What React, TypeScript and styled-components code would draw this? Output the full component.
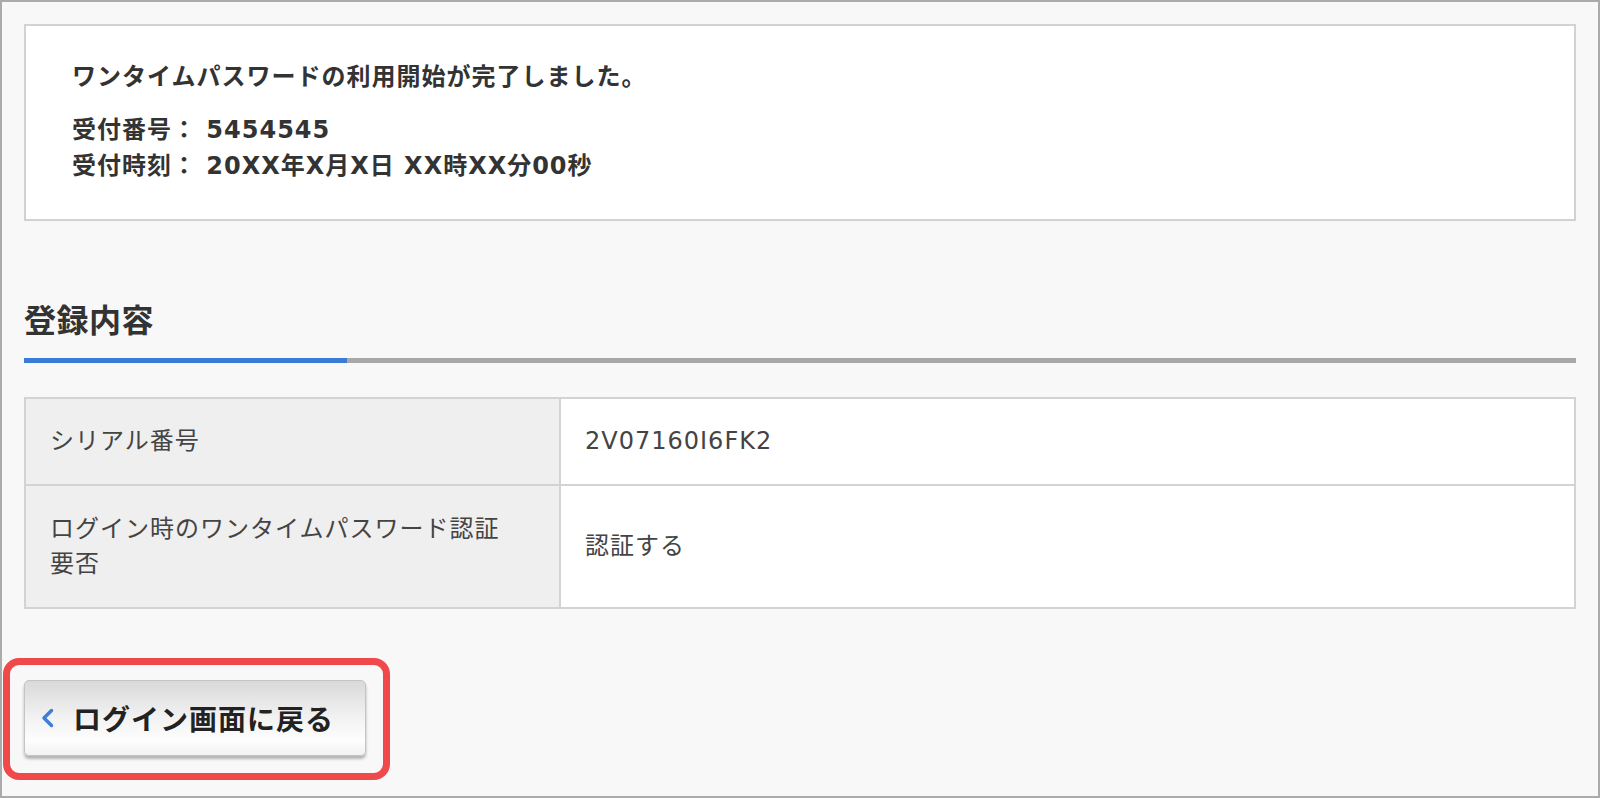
import styled, { createGlobalStyle } from "styled-components";

const rows = [
  { label: "シリアル番号", value: "2V07160I6FK2", height: 87 },
  {
    label: "ログイン時のワンタイムパスワード認証要否",
    value: "認証する",
    height: 123,
  },
];

const App = () => {
  return (
    <>
      <GlobalStyle />
      <Frame>
        <InfoBox>
          <Message>ワンタイムパスワードの利用開始が完了しました。</Message>
          <InfoLine>受付番号： 5454545</InfoLine>
          <InfoLine>受付時刻： 20XX年X月X日 XX時XX分00秒</InfoLine>
        </InfoBox>

        <Section>
          <Heading>登録内容</Heading>
          <Underline>
            <BlueBar />
            <GrayBar />
          </Underline>
          <DetailTable>
            <tbody>
              {rows.map((row) => (
                <tr key={row.label}>
                  <LabelCell $height={row.height}>{row.label}</LabelCell>
                  <ValueCell>{row.value}</ValueCell>
                </tr>
              ))}
            </tbody>
          </DetailTable>
        </Section>

        <Highlight>
          <BackButton type="button">
            <Chevron width="13" height="22" viewBox="0 0 13 22">
              <polyline
                points="10.5,3.5 3,11 10.5,18.5"
                fill="none"
                stroke="#3d7fd6"
                strokeWidth="3.5"
                strokeLinecap="round"
                strokeLinejoin="round"
              />
            </Chevron>
            ログイン画面に戻る
          </BackButton>
        </Highlight>
      </Frame>
    </>
  );
};

export default App;

const GlobalStyle = createGlobalStyle`
  html, body {
    margin: 0;
    padding: 0;
    background: #f8f8f8;
  }
  body {
    font-family: "DejaVu Sans", "Noto Sans CJK JP", sans-serif;
  }
  * {
    box-sizing: border-box;
  }
`;

const Frame = styled.div`
  width: 1600px;
  height: 798px;
  border: 2px solid #ababab;
  background: #f8f8f8;
  padding: 22px 22px 0 22px;
  overflow: hidden;
  color: #333333;
`;

const InfoBox = styled.div`
  background: #ffffff;
  border: 2px solid #d2d2d2;
  padding: 33px 46px 35px 46px;
`;

const Message = styled.div`
  font-size: 24px;
  font-weight: 700;
  letter-spacing: 1px;
  line-height: 36px;
  margin-bottom: 17px;
`;

const InfoLine = styled(Message)`
  margin-bottom: 0;
`;

const Section = styled.section`
  margin-top: 80px;
`;

const Heading = styled.h2`
  margin: 0;
  font-size: 32px;
  font-weight: 700;
  line-height: 40px;
  letter-spacing: 0.5px;
  padding-bottom: 17px;
  color: #333333;
`;

const Underline = styled.div`
  display: flex;
  height: 5px;
`;

const BlueBar = styled.div`
  width: 323px;
  background: #3a7bd5;
`;

const GrayBar = styled.div`
  flex: 1;
  background: #a8a8a8;
`;

const DetailTable = styled.table`
  width: 100%;
  margin-top: 34px;
  border-collapse: collapse;
  table-layout: fixed;
  background: #ffffff;
  font-size: 24px;
  letter-spacing: 1px;
  line-height: 35px;
  color: #444444;

  td,
  th {
    border: 2px solid #d3d3d3;
  }
`;

const LabelCell = styled.th<{ $height: number }>`
  width: 535px;
  height: ${(p) => p.$height}px;
  background: #efefef;
  font-weight: 400;
  text-align: left;
  padding: 0 40px 0 24px;
`;

const ValueCell = styled.td`
  padding: 0 24px;
`;

const Highlight = styled.div`
  width: fit-content;
  margin: 49px 0 0 -21px;
  padding: 15px 17px 17px 14px;
  border: 7px solid #f0494b;
  border-radius: 16px;
`;

const BackButton = styled.button`
  display: flex;
  align-items: center;
  gap: 19px;
  width: 342px;
  height: 76px;
  padding: 0 0 0 16px;
  border: 1px solid #c4c4c4;
  border-radius: 5px;
  background: linear-gradient(#d9d9d9, #f0f0f0 45%, #fdfdfd 80%, #f2f2f2);
  box-shadow: 0 3px 3px rgba(0, 0, 0, 0.28);
  font-family: "Noto Sans CJK JP", sans-serif;
  font-size: 28px;
  font-weight: 700;
  letter-spacing: 1px;
  color: #222222;
  cursor: pointer;
`;

const Chevron = styled.svg`
  flex-shrink: 0;
`;
